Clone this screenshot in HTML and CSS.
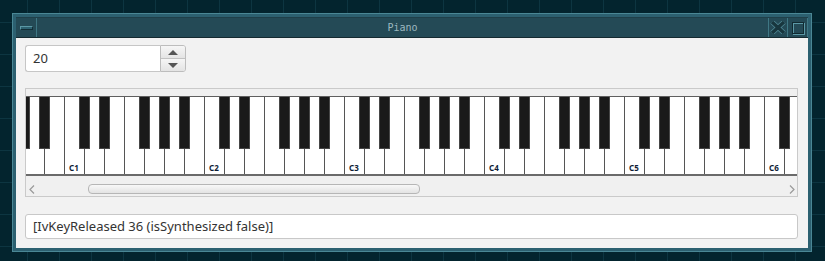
FILE: index.html
```html
<!DOCTYPE html>
<html lang="en">

<head>
    <meta charset="UTF-8">
    <title>Piano</title>
    <link rel="stylesheet" href="styles.css">
</head>

<body>

    <div class="window">
        <div class="titlebar">
            <div class="tbtn menu-btn"><span class="menu-bar"></span></div>
            <div class="title">Piano</div>
            <div class="tbtn close-btn">
                <svg width="16" height="13" viewBox="0 0 16 13">
                    <path d="M2 1 L14 12 M14 1 L2 12" stroke="#4f8794" stroke-width="5" />
                    <path d="M2 1 L14 12 M14 1 L2 12" stroke="#18363e" stroke-width="3.4" />
                </svg>
            </div>
            <div class="tbtn max-btn"><span class="max-box"></span></div>
        </div>

        <div class="content">
            <div class="spinner">
                <div class="spin-field">20</div>
                <div class="spin-buttons">
                    <div class="spin-btn"><span class="tri-up"></span></div>
                    <div class="spin-btn"><span class="tri-down"></span></div>
                </div>
            </div>

            <div class="piano-panel">
                <div class="keys">
                    <div class="keyboard" id="keyboard"></div>
                </div>
                <div class="scrollbar">
                    <div class="arrow">
                        <svg width="6" height="9" viewBox="0 0 6 9"><path d="M5 0.5 L1 4.5 L5 8.5" fill="none" stroke="#9a9a9a" stroke-width="1.2" /></svg>
                    </div>
                    <div class="track"><div class="thumb"></div></div>
                    <div class="arrow right">
                        <svg width="6" height="9" viewBox="0 0 6 9"><path d="M1 0.5 L5 4.5 L1 8.5" fill="none" stroke="#9a9a9a" stroke-width="1.2" /></svg>
                    </div>
                </div>
            </div>

            <div class="status">[IvKeyReleased 36 (isSynthesized false)]</div>
        </div>
    </div>

    <script>
        // White keys from G0 onwards, black key sits on the right edge of C, D, F, G, A
        const names = ['C', 'D', 'E', 'F', 'G', 'A', 'B'];
        const hasBlack = { C: true, D: true, F: true, G: true, A: true };
        const keyboard = document.getElementById('keyboard');

        let note = 4; // G
        let octave = 0;
        for (let i = 0; i < 40; i++) {
            let name = names[note];
            let key = document.createElement('div');
            key.className = 'white-key';
            if (name === 'C') {
                let label = document.createElement('span');
                label.className = 'key-label';
                label.textContent = 'C' + octave;
                key.appendChild(label);
            }
            if (hasBlack[name]) {
                let black = document.createElement('span');
                black.className = 'black-key';
                key.appendChild(black);
            }
            keyboard.appendChild(key);
            note++;
            if (note === 7) {
                note = 0;
                octave++;
            }
        }
    </script>

</body>

</html>
```

FILE: styles.css
```css
* {
    box-sizing: border-box;
}

body {
    margin: 0;
    width: 825px;
    height: 261px;
    overflow: hidden;
    background-color: #03242e;
    background-image:
        linear-gradient(to right, #0d3541 1px, transparent 1px),
        linear-gradient(to bottom, #0d3541 1px, transparent 1px);
    background-size: 32px 32px;
    background-position: 27px 22px;
    font-family: "Noto Sans", sans-serif;
}

/* window frame */
.window {
    margin: 13px 0 0 12px;
    width: 800px;
    height: 239px;
    padding: 3px;
    border: 1px solid #4a8795;
    background: #2c6070;
    display: flex;
    flex-direction: column;
}

.titlebar {
    height: 21px;
    display: flex;
    align-items: stretch;
    background: #244a56;
    border-top: 1px solid #1f3f49;
    border-bottom: 1px solid #152a30;
}

.tbtn {
    width: 21px;
    display: flex;
    align-items: center;
    justify-content: center;
}

.menu-btn {
    border-right: 1px solid #3f7784;
}

.menu-bar {
    width: 13px;
    height: 4px;
    background: #2d6271;
    border: 1px solid #122d35;
    border-top-color: #5b98a5;
    border-left-color: #5b98a5;
}

.title {
    flex: 1;
    text-align: center;
    color: #9db9c0;
    font-family: "DejaVu Sans Mono", monospace;
    font-size: 10px;
    line-height: 19px;
}

.close-btn {
    width: 20px;
    border-left: 1px solid #3f7784;
    border-right: 1px solid #3f7784;
}

.max-btn {
    width: 20px;
    border-right: 1px solid #3f7784;
}

.max-box {
    width: 12px;
    height: 12px;
    border: 1px solid #112a31;
    box-shadow: inset 1px 1px 0 #5b98a5, 1px 1px 0 #5b98a5;
}

/* client area */
.content {
    flex: 1;
    background: #f2f2f2;
    padding: 7px 10px 9px 9px;
    display: flex;
    flex-direction: column;
}

.spinner {
    display: flex;
    width: 161px;
    height: 27px;
}

.spin-field {
    flex: 1;
    background: #fff;
    border: 1px solid #c6c6c6;
    border-right: none;
    border-radius: 3px 0 0 3px;
    padding-left: 7px;
    font-size: 13px;
    line-height: 25px;
    color: #333;
}

.spin-buttons {
    width: 26px;
    display: flex;
    flex-direction: column;
    border: 1px solid #bdbdbd;
    border-radius: 0 3px 3px 0;
    overflow: hidden;
}

.spin-btn {
    flex: 1;
    display: flex;
    align-items: center;
    justify-content: center;
    background: linear-gradient(#f6f6f6, #e4e4e4);
}

.spin-btn + .spin-btn {
    border-top: 1px solid #c2c2c2;
}

.tri-up {
    border-left: 5px solid transparent;
    border-right: 5px solid transparent;
    border-bottom: 5px solid #555;
}

.tri-down {
    border-left: 5px solid transparent;
    border-right: 5px solid transparent;
    border-top: 5px solid #555;
}

/* piano */
.piano-panel {
    margin-top: 16px;
    height: 109px;
    border: 1px solid #cacaca;
    padding-top: 7px;
    background: #f0f0f0;
}

.keys {
    height: 80px;
    overflow: hidden;
    border-top: 1px solid #5f5f5f;
    border-bottom: 2px solid #6a6a6a;
}

.keyboard {
    display: flex;
    height: 77px;
    margin-left: -22px;
}

.white-key {
    flex: 0 0 20px;
    position: relative;
    background: #fff;
    border-left: 1px solid #555;
    display: flex;
    align-items: flex-end;
    padding: 0 0 2px 4px;
}

.black-key {
    position: absolute;
    top: -1px;
    left: 14px;
    width: 11px;
    height: 53px;
    background: #1a1a1a;
    border: 1px solid #474747;
    z-index: 1;
}

.key-label {
    font-size: 8px;
    font-weight: bold;
    line-height: 9px;
    color: #0f1d36;
}

.scrollbar {
    margin-top: 6px;
    height: 14px;
    display: flex;
    align-items: center;
}

.arrow {
    width: 12px;
    display: flex;
    padding-left: 3px;
}

.arrow.right {
    padding-left: 4px;
}

.track {
    flex: 1;
}

.thumb {
    margin-left: 50px;
    width: 332px;
    height: 10px;
    border: 1px solid #b6b6b6;
    border-radius: 4px;
    background: linear-gradient(#f8f8f8, #e3e3e3);
}

/* event log field */
.status {
    margin-top: 17px;
    height: 25px;
    background: #fff;
    border: 1px solid #c8c8c8;
    border-radius: 3px;
    padding-left: 7px;
    font-size: 13px;
    line-height: 23px;
    color: #333;
}
```
